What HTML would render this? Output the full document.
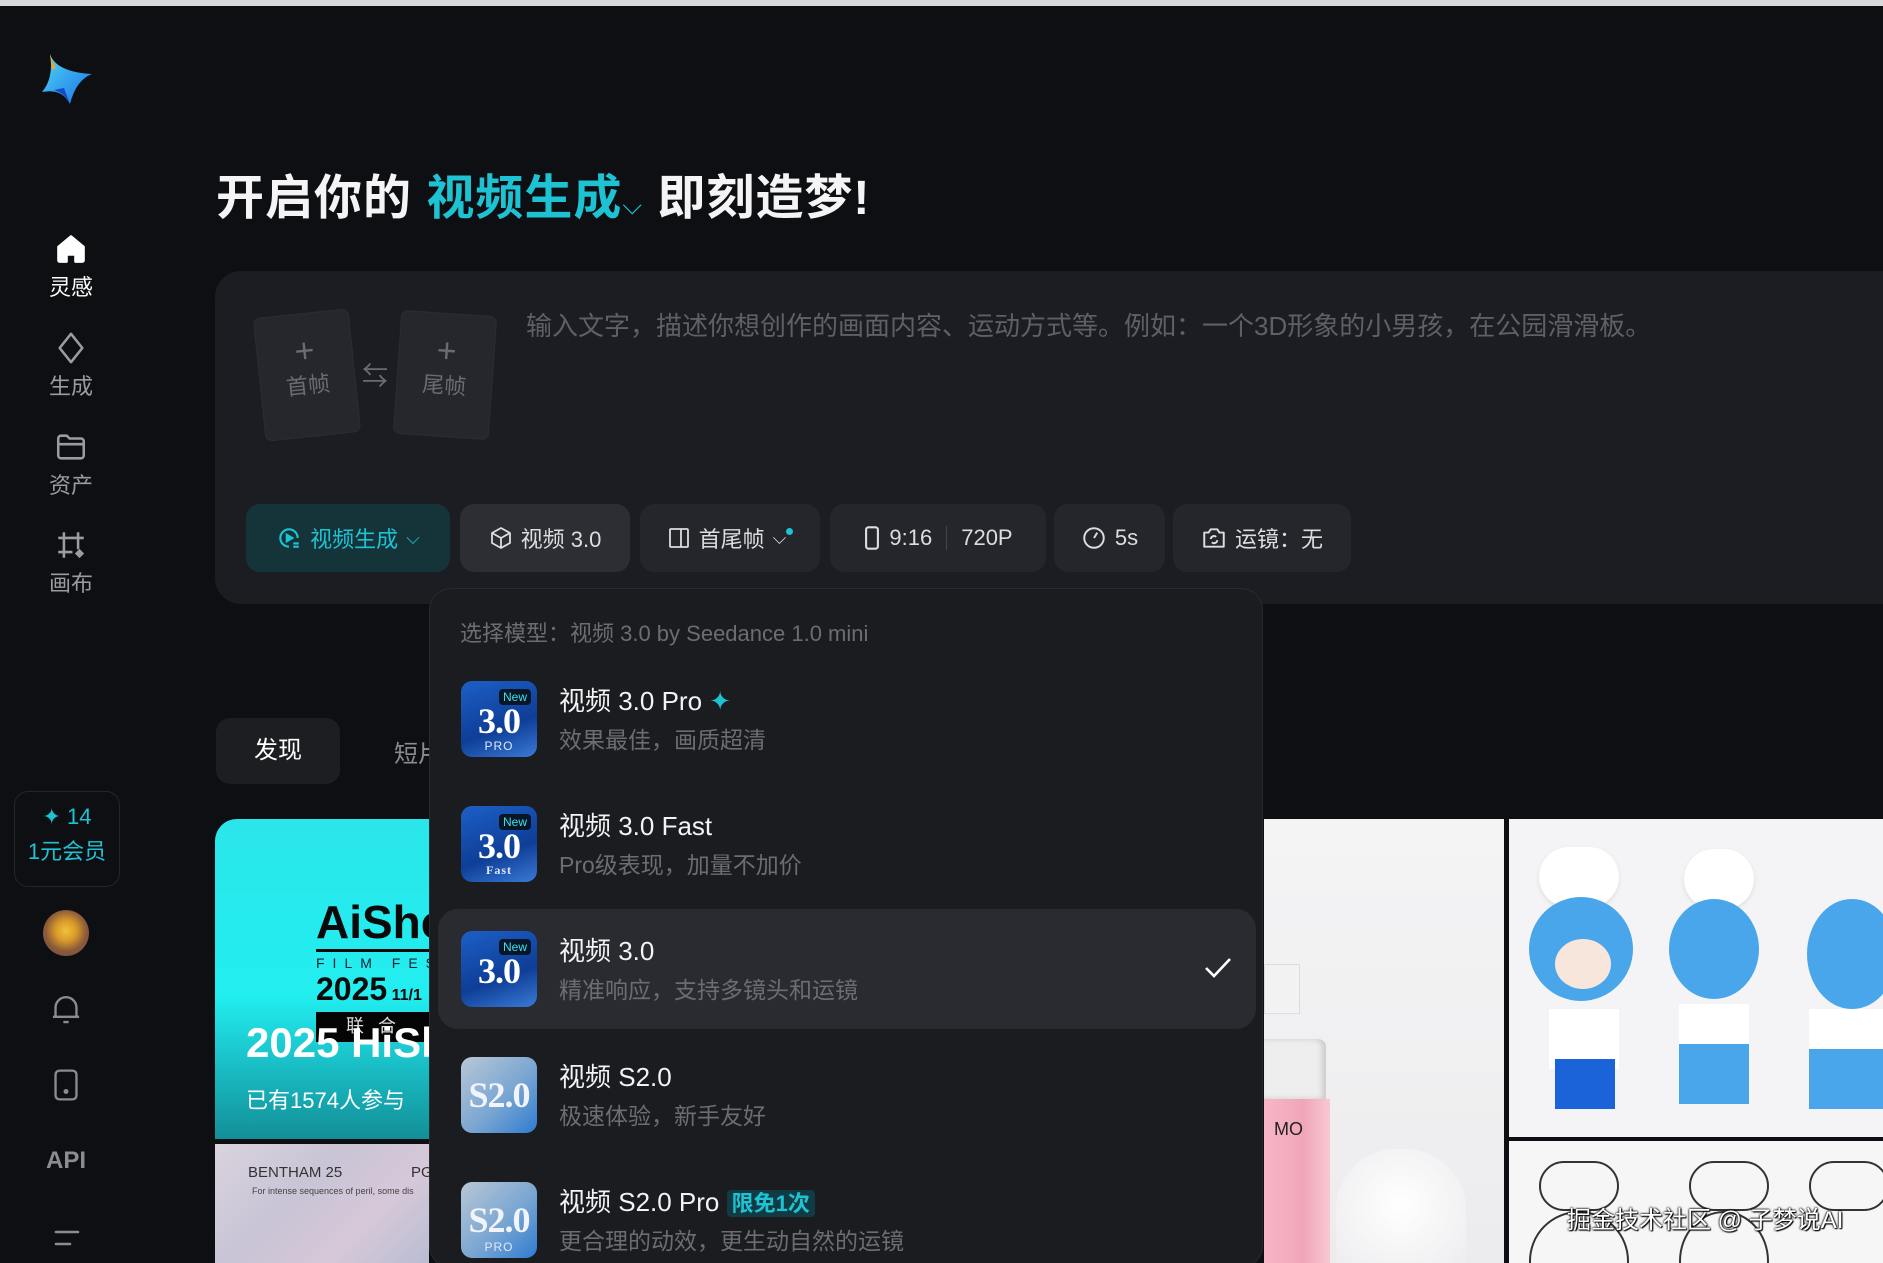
<!DOCTYPE html>
<html><head><meta charset="utf-8"><style>
*{margin:0;padding:0;box-sizing:border-box}
html{width:1883px;height:1263px;overflow:hidden}
body{width:1883px;height:1263px;overflow:hidden;background:#0e0f12;font-family:"Liberation Sans","Noto Sans CJK SC",sans-serif;color:#e8e9ec;position:relative}
.a{position:absolute}
.topbar{left:0;top:0;width:1883px;height:6px;background:#d9d9dc}
.nav{width:80px;left:31px;text-align:center;font-size:22px;color:#9a9ca2}
.nav svg{display:block;margin:0 auto 4px}
.title{left:216px;top:158px;font-size:48px;font-weight:bold;color:#f4f4f6;white-space:nowrap;letter-spacing:1px}
.title .c{color:#1ec3d3}
.panel{left:215px;top:271px;width:1700px;height:333px;background:#1c1d22;border-radius:26px}
.card{width:94px;height:122px;background:#26272c;border-radius:6px;text-align:center;color:#6a6c72;font-size:22px;box-shadow:0 0 0 1px #2c2d32}
.card b{display:block;font-size:34px;font-weight:300;margin-top:20px;line-height:34px}
.ph{left:526px;top:306px;font-size:26px;color:#5e6067;white-space:nowrap}
.btn{top:504px;height:68px;border-radius:14px;background:#25262b;display:flex;align-items:center;justify-content:center;font-size:22px;color:#dcdde0;gap:8px;white-space:nowrap}
.dd{left:429px;top:588px;width:834px;height:680px;background:#1b1c20;border-radius:22px;border:1px solid #2a2b30;overflow:hidden}
.hdr{left:30px;top:27px;font-size:22px;color:#6b6d73;white-space:nowrap}
.it{left:8px;width:818px;height:120px;border-radius:20px}
.ic{position:absolute;left:23px;top:12px;width:76px;height:76px;border-radius:11px;overflow:hidden;background:linear-gradient(160deg,#1d5fc7,#0e3e97 60%,#3a7ad6);color:#fff;font-family:"Liberation Serif",serif;font-weight:bold;text-align:center}
.ic .n{position:absolute;right:6px;top:8px;background:#081628;color:#3be3e8;font:12px "Liberation Sans",sans-serif;padding:1px 4px;border-radius:4px}
.ic .v{position:absolute;left:0;right:0;top:22px;font-size:36px;line-height:36px;letter-spacing:-1px}
.ic .s{position:absolute;left:0;right:0;bottom:4px;font:12px "Liberation Sans",sans-serif;letter-spacing:1px;color:#dfe8ff}
.ic.g{background:linear-gradient(135deg,#b9c7d6,#7aa6d2 55%,#2f7bd0)}
.ic.g .v{top:20px;font-size:36px;color:#f1f5fb}
.t1{position:absolute;left:121px;top:12px;font-size:26px;color:#f2f3f5;white-space:nowrap}
.t2{position:absolute;left:121px;top:52px;font-size:23px;color:#6b6d73;white-space:nowrap}
.mem{left:14px;top:791px;width:106px;height:96px;border:1px solid #25262b;border-radius:14px;text-align:center;color:#1ec3d3}
</style></head><body>
<div class="a topbar"></div>
<svg class="a" style="left:40px;top:54px" width="54" height="56" viewBox="0 0 54 56">
<defs><linearGradient id="lg" x1="0" y1="0" x2="1" y2="1"><stop offset="0" stop-color="#4fd9f5"/><stop offset="1" stop-color="#1b6fe6"/></linearGradient></defs>
<path d="M10 0 Q16 18 52 20 Q36 26 30 50 Q22 34 2 38 Q14 24 10 0Z" fill="url(#lg)"/>
<path d="M10 0 Q12 8 16 14 L12 16Z" fill="#f5a524"/>
<path d="M30 50 Q26 40 14 36 L24 34Z" fill="#1749c6"/>
</svg>
<div class="a nav" style="top:232px;color:#fff"><svg width="34" height="34" viewBox="0 0 24 24"><path d="M3 10.5 12 3l9 7.5V20a1 1 0 0 1-1 1h-5v-5h-6v5H4a1 1 0 0 1-1-1z" fill="#fff" stroke="#fff" stroke-width="1.5" stroke-linejoin="round"/></svg>灵感</div>
<div class="a nav" style="top:331px"><svg width="34" height="34" viewBox="0 0 24 24" fill="none" stroke="#9a9ca2" stroke-width="1.8"><path d="M12 2 20 12 12 22 4 12Z" stroke-linejoin="round"/></svg>生成</div>
<div class="a nav" style="top:430px"><svg width="34" height="34" viewBox="0 0 24 24" fill="none" stroke="#9a9ca2" stroke-width="1.8"><path d="M3 6a2 2 0 0 1 2-2h4l2 2h8a2 2 0 0 1 2 2v10a2 2 0 0 1-2 2H5a2 2 0 0 1-2-2zM3 10h18"/></svg>资产</div>
<div class="a nav" style="top:528px"><svg width="34" height="34" viewBox="0 0 24 24" fill="none" stroke="#9a9ca2" stroke-width="1.8"><path d="M7 3v18M3 7h18M17 3v12M3 17h10"/><path d="M18 16l2 2-2 2-2-2z" fill="#9a9ca2"/></svg>画布</div>
<div class="a title">开启你的 <span class="c">视频生成</span><span class="c" style="font-size:26px;font-weight:normal">⌵</span> 即刻造梦!</div>
<div class="a panel"></div>
<div class="a card" style="left:260px;top:314px;transform:rotate(-6deg)"><b>+</b>首帧</div>
<div class="a" style="left:362px;top:356px;color:#6a6c72;font-size:26px">⇆</div>
<div class="a card" style="left:398px;top:314px;transform:rotate(4deg)"><b>+</b>尾帧</div>
<div class="a ph">输入文字，描述你想创作的画面内容、运动方式等。例如：一个3D形象的小男孩，在公园滑滑板。</div>
<div class="a btn" style="left:246px;width:204px;background:#15343a;color:#1ec3d3"><svg width="26" height="26" viewBox="0 0 24 24" fill="none" stroke="#1ec3d3" stroke-width="2"><path d="M20 12a8 8 0 1 0-8 8"/><path d="M10 9l5 3-5 3z" fill="#1ec3d3"/><path d="M16 17h5M16 20h5"/></svg>视频生成 <span style="font-size:18px">⌵</span></div>
<div class="a btn" style="left:460px;width:170px;background:#2d2e34"><svg width="24" height="24" viewBox="0 0 24 24" fill="none" stroke="#dcdde0" stroke-width="1.8" stroke-linejoin="round"><path d="M12 2 21 7v10l-9 5-9-5V7z M3 7l9 5 9-5M12 12v10"/></svg>视频 3.0</div>
<div class="a btn" style="left:640px;width:180px"><svg width="24" height="24" viewBox="0 0 24 24" fill="none" stroke="#dcdde0" stroke-width="1.8"><rect x="3" y="3" width="18" height="18" rx="1"/><path d="M14 3v18"/></svg>首尾帧 <span style="font-size:18px">⌵</span><span style="width:7px;height:7px;border-radius:50%;background:#1ec3d3;margin:-14px 0 0 -8px"></span></div>
<div class="a btn" style="left:830px;width:216px"><svg width="18" height="26" viewBox="0 0 14 22" fill="none" stroke="#dcdde0" stroke-width="1.8"><rect x="2" y="2" width="10" height="18" rx="2"/></svg>9:16 <span style="width:1px;height:24px;background:#44464c;margin:0 6px"></span> 720P</div>
<div class="a btn" style="left:1054px;width:111px"><svg width="26" height="26" viewBox="0 0 24 24" fill="none" stroke="#dcdde0" stroke-width="1.8"><circle cx="12" cy="12" r="9"/><path d="M12 12l3-5"/></svg>5s</div>
<div class="a btn" style="left:1173px;width:178px"><svg width="26" height="26" viewBox="0 0 24 24" fill="none" stroke="#dcdde0" stroke-width="1.8" stroke-linejoin="round"><path d="M3 7h4l2-3h6l2 3h4v13H3z"/><path d="M9 13a3 3 0 0 1 5-2M15 14a3 3 0 0 1-5 2"/></svg>运镜：无</div>
<div class="a" style="left:216px;top:718px;width:124px;height:66px;background:#1d1e22;border-radius:14px;font-size:24px;color:#fff;text-align:center;line-height:66px">发现</div>
<div class="a" style="left:394px;top:734px;font-size:24px;color:#8a8c92">短片</div>
<div class="a" style="left:215px;top:819px;width:214px;height:320px;border-radius:22px 0 0 0;overflow:hidden;background:linear-gradient(180deg,#2ae6ea 0%,#22eef0 55%,#18b8c0 80%,#138f98 100%)">
 <div class="a" style="left:101px;top:76px;font-size:46px;font-weight:bold;color:#0a0a0a;white-space:nowrap">AiSho</div>
 <div class="a" style="left:101px;top:130px;width:200px;height:3px;background:#0a0a0a"></div>
 <div class="a" style="left:101px;top:136px;font-size:14px;letter-spacing:8px;color:#123;white-space:nowrap">FILM FES</div>
 <div class="a" style="left:101px;top:152px;font-size:32px;font-weight:bold;color:#0a0a0a;white-space:nowrap">2025<span style="font-size:16px"> 11/1</span></div>
 <div class="a" style="left:101px;top:193px;width:200px;height:30px;background:#050505;color:#ddd;font-size:18px;padding-left:30px;letter-spacing:14px">联合</div>
 <div class="a" style="left:31px;top:200px;font-size:42px;font-weight:bold;color:#fff;white-space:nowrap">2025 HiSh</div>
 <div class="a" style="left:31px;top:264px;font-size:22px;color:#fff;white-space:nowrap">已有1574人参与</div>
</div>
<div class="a" style="left:215px;top:1144px;width:214px;height:119px;overflow:hidden;background:linear-gradient(135deg,#d9d3dc,#c9c4d6 40%,#d6c8d8 70%,#b8bdd2)">
 <div class="a" style="left:33px;top:20px;font-size:15px;color:#333;white-space:nowrap">BENTHAM 25</div>
 <div class="a" style="left:196px;top:20px;font-size:15px;color:#333">PG</div>
 <div class="a" style="left:37px;top:42px;font-size:9px;color:#444;white-space:nowrap">For intense sequences of peril, some dis</div>
</div>
<div class="a" style="left:1264px;top:819px;width:240px;height:444px;overflow:hidden;background:linear-gradient(180deg,#f4f4f5,#ececee)">
 <div class="a" style="left:0;top:145px;width:36px;height:50px;background:#f2f2f2;border:1px solid #ddd"></div>
 <div class="a" style="left:0;top:220px;width:62px;height:60px;background:#eee;border-radius:0 8px 0 0;box-shadow:inset -4px 0 6px #ccc"></div>
 <div class="a" style="left:0;top:280px;width:66px;height:180px;background:linear-gradient(90deg,#f7b6c6,#f0a6b8 60%,#f8c8d3)"></div>
 <div class="a" style="left:10px;top:300px;font-size:18px;color:#222">MO</div>
 <div class="a" style="left:72px;top:330px;width:130px;height:140px;border-radius:60px 60px 0 0;background:radial-gradient(circle at 50% 40%,#fff,#e9e9ec)"></div>
</div>
<div class="a" style="left:1509px;top:819px;width:374px;height:318px;background:#f4f4f6;overflow:hidden">
 <div class="a" style="left:30px;top:28px;width:80px;height:60px;border-radius:30px;background:#fff;box-shadow:0 2px 4px #ddd"></div>
 <div class="a" style="left:20px;top:78px;width:104px;height:104px;border-radius:50%;background:#4aa6ea"></div>
 <div class="a" style="left:46px;top:120px;width:56px;height:50px;border-radius:50%;background:#f6e6dc"></div>
 <div class="a" style="left:40px;top:190px;width:70px;height:60px;background:#fff"></div>
 <div class="a" style="left:46px;top:240px;width:60px;height:50px;background:#1b63d8"></div>
 <div class="a" style="left:175px;top:30px;width:70px;height:60px;border-radius:30px;background:#fff;box-shadow:0 2px 4px #ddd"></div>
 <div class="a" style="left:160px;top:80px;width:90px;height:100px;border-radius:50%;background:#4aa6ea"></div>
 <div class="a" style="left:170px;top:185px;width:70px;height:100px;background:linear-gradient(#fff 40%,#4aa6ea 40%)"></div>
 <div class="a" style="left:298px;top:80px;width:90px;height:110px;border-radius:50%;background:#4aa6ea"></div>
 <div class="a" style="left:300px;top:190px;width:80px;height:100px;background:linear-gradient(#fff 40%,#4aa6ea 40%)"></div>
</div>
<div class="a" style="left:1509px;top:1141px;width:374px;height:122px;background:#f6f6f6;overflow:hidden">
 <div class="a" style="left:30px;top:20px;width:80px;height:50px;border-radius:30px;border:2px solid #333"></div>
 <div class="a" style="left:20px;top:70px;width:100px;height:100px;border-radius:50%;border:2px solid #333"></div>
 <div class="a" style="left:180px;top:20px;width:80px;height:50px;border-radius:30px;border:2px solid #333"></div>
 <div class="a" style="left:170px;top:70px;width:90px;height:100px;border-radius:50%;border:2px solid #333"></div>
 <div class="a" style="left:300px;top:20px;width:80px;height:50px;border-radius:30px;border:2px solid #333"></div>
</div>
<div class="a" style="left:1567px;top:1200px;font-size:24px;color:#fff;white-space:nowrap;text-shadow:0 0 2px #000,0 0 2px #000,1px 1px 1px #000">掘金技术社区 @ 子梦说AI</div>
<div class="a dd">
 <div class="a hdr">选择模型：视频 3.0 by Seedance 1.0 mini</div>
 <div class="a it" style="top:80px"><div class="ic"><span class="n">New</span><span class="v">3.0</span><span class="s">PRO</span></div><div class="t1">视频 3.0 Pro <span style="color:#1ec3d3">✦</span></div><div class="t2">效果最佳，画质超清</div></div>
 <div class="a it" style="top:205px"><div class="ic"><span class="n">New</span><span class="v">3.0</span><span class="s" style="font-family:'Liberation Serif',serif;font-weight:bold">Fast</span></div><div class="t1">视频 3.0 Fast</div><div class="t2">Pro级表现，加量不加价</div></div>
 <div class="a it" style="top:320px;height:120px;background:#2a2b31"><div class="ic" style="top:22px"><span class="n">New</span><span class="v">3.0</span></div><div class="t1" style="top:22px">视频 3.0</div><div class="t2" style="top:62px">精准响应，支持多镜头和运镜</div>
  <svg class="a" style="left:765px;top:46px" width="30" height="26" viewBox="0 0 30 26" fill="none" stroke="#fff" stroke-width="2.6"><path d="M3 13l8 8L27 4"/></svg></div>
 <div class="a it" style="top:456px"><div class="ic g"><span class="v">S2.0</span></div><div class="t1">视频 S2.0</div><div class="t2">极速体验，新手友好</div></div>
 <div class="a it" style="top:581px"><div class="ic g"><span class="v">S2.0</span><span class="s">PRO</span></div><div class="t1">视频 S2.0 Pro <span style="background:#123a42;color:#1ec3d3;font-size:22px;font-weight:bold;padding:1px 5px;border-radius:4px">限免1次</span></div><div class="t2">更合理的动效，更生动自然的运镜</div></div>
</div>
<div class="a mem"><div style="font-size:22px;margin-top:12px">✦ 14</div><div style="font-size:22px;margin-top:4px">1元会员</div></div>
<div class="a" style="left:43px;top:910px;width:46px;height:46px;border-radius:50%;background:radial-gradient(circle at 50% 45%,#f0c23a 0,#d99a2a 30%,#8a5a3a 60%,#6b4a4a)"></div>
<svg class="a" style="left:50px;top:992px" width="32" height="34" viewBox="0 0 24 26" fill="none" stroke="#8a8c92" stroke-width="1.8"><path d="M4 19V12a8 8 0 0 1 16 0v7zM2 19h20M10 23h4"/></svg>
<svg class="a" style="left:52px;top:1068px" width="28" height="34" viewBox="0 0 20 26" fill="none" stroke="#8a8c92" stroke-width="1.8"><rect x="2" y="2" width="16" height="22" rx="3"/><circle cx="10" cy="18" r="1" fill="#8a8c92"/></svg>
<div class="a" style="left:46px;top:1147px;font-size:24px;font-weight:bold;color:#8a8c92">API</div>
<svg class="a" style="left:52px;top:1228px" width="30" height="20" viewBox="0 0 30 20" stroke="#8a8c92" stroke-width="2.6" stroke-linecap="round"><path d="M4 4h22M4 16h14"/></svg>
</body></html>
